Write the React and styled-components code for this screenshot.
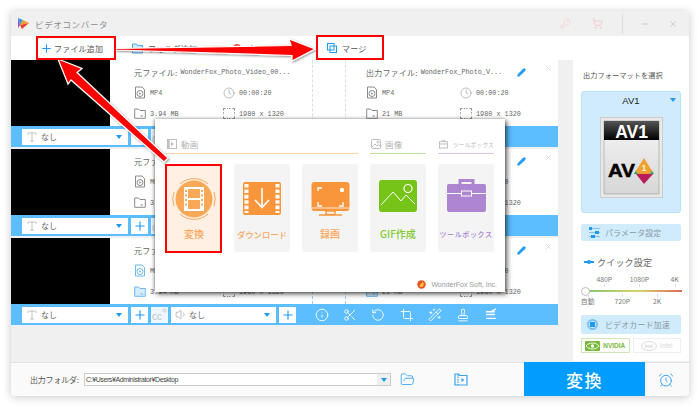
import React from "react";
import styled, { createGlobalStyle } from "styled-components";
import {
  Plus, X, Minus, KeyRound, ShoppingCart, Clock, Type, Volume1, Info, Scissors,
  RotateCcw, Crop, Wand2, Stamp, FolderOpen, AlarmClock, Pencil, ChevronRight,
} from "lucide-react";

const JP = `"Noto Sans CJK JP", "Noto Sans", sans-serif`;
const BLUE = "#1e9af5";

const Global = createGlobalStyle`
  html, body { margin: 0; padding: 0; background: #fff; }
  body { font-family: ${JP}; color: #555; overflow: hidden; }
`;

const Page = styled.div`
  position: relative;
  width: 700px;
  height: 407px;
  padding: 11px;
  box-sizing: border-box;
  background: #fff;
  overflow: hidden;
`;
const Win = styled.div`
  width: 678px;
  height: 385px;
  display: flex;
  flex-direction: column;
  background: #f0f0f0;
  border-radius: 3px;
  box-shadow: 0 1px 9px rgba(0, 0, 0, 0.22);
  overflow: hidden;
`;
const TitleBar = styled.div`
  height: 25px;
  flex: none;
  display: flex;
  align-items: center;
  background: #f0f0f0;
  padding-left: 6px;
`;
const AppName = styled.span`
  margin-left: 5px;
  font-size: 8.5px;
  letter-spacing: 0.65px;
  color: #8d8d8d;
`;
const TitleIcons = styled.div`
  margin-left: auto;
  margin-right: 2px;
  height: 100%;
  display: flex;
  align-items: center;
  color: #f3c9c4;
`;
const TitleSlot = styled.span`
  display: flex;
  justify-content: center;
  box-sizing: border-box;
  width: ${(p) => p.$w}px;
  padding-left: ${(p) => p.$pl || 0}px;
  margin-right: ${(p) => p.$mr || 0}px;
  color: ${(p) => p.$c || "inherit"};
  border-left: ${(p) => (p.$div ? "1px solid #ddd" : "none")};
  align-items: center;
  height: ${(p) => (p.$div ? "20px" : "auto")};
`;
const Toolbar = styled.div`
  height: 24px;
  flex: none;
  display: flex;
  align-items: center;
  background: #fff;
  padding-left: 29px;
`;
const ToolItem = styled.div`
  display: flex;
  align-items: center;
  gap: ${(p) => p.$gap || 4}px;
  width: ${(p) => p.$w}px;
  font-size: 8px;
  letter-spacing: 0.2px;
  color: #555;
  flex: none;
`;
const Main = styled.div`
  flex: 1;
  display: flex;
  min-height: 0;
`;
const List = styled.div`
  width: 547px;
  flex: none;
  display: flex;
  flex-direction: column;
  gap: 2px;
`;
const Row = styled.div`
  display: flex;
  flex-direction: column;
`;
const RowBody = styled.div`
  height: 66px;
  display: flex;
  background: #fff;
`;
const Thumb = styled.div`
  width: 99px;
  flex: none;
  background: #000;
`;
const InfoBlock = styled.div`
  width: ${(p) => p.$w}px;
  flex: none;
  box-sizing: border-box;
  padding: 6px 0 0 ${(p) => p.$pl}px;
`;
const Gutter = styled.div`
  width: 32px;
  flex: none;
  display: flex;
  align-items: center;
  color: #e3e3e3;
  border-left: 1px dashed ${(p) => (p.$on ? "#9ccff3" : "#dedede")};
  border-right: 1px dashed ${(p) => (p.$on ? "#9ccff3" : "#dedede")};
`;
const TitleLine = styled.div`
  height: 12px;
  display: flex;
  align-items: center;
  margin-bottom: 4px;
  white-space: nowrap;
`;
const Label = styled.span`
  font-size: 8px;
  letter-spacing: 0.2px;
  color: #666;
`;
const Mono = styled.span`
  font-family: "Liberation Mono", monospace;
  font-size: 6.8px;
  color: #666;
  margin-left: ${(p) => p.$ml || 0}px;
`;
const Close = styled.span`
  margin-left: auto;
  margin-right: 5px;
  margin-top: -7px;
  display: flex;
  color: #bdbdbd;
`;
const Pen = styled.span`
  display: flex;
  margin-left: 15px;
  color: ${BLUE};
`;
const Meta = styled.div`
  display: grid;
  grid-template-columns: ${(p) => p.$c}px 1fr;
  grid-auto-rows: 21px;
`;
const MetaCell = styled.div`
  display: flex;
  align-items: center;
  gap: 4px;
  color: ${(p) => (p.$on ? "#6fb9ee" : "#8a8a8a")};
`;
const Strip = styled.div`
  height: 21px;
  display: flex;
  align-items: center;
  background: #5cbdff;
  padding-left: 11px;
  box-sizing: border-box;
`;
const Select = styled.div`
  width: ${(p) => p.$w}px;
  height: 16px;
  flex: none;
  box-sizing: border-box;
  padding: 0 6px 0 4px;
  display: flex;
  align-items: center;
  gap: ${(p) => p.$gap}px;
  background: #fff;
  font-size: 8px;
  color: #666;
  margin-right: 3px;
`;
const Caret = styled.span`
  margin-left: auto;
  width: 0;
  height: 0;
  border-left: 3.5px solid transparent;
  border-right: 3.5px solid transparent;
  border-top: 4px solid ${BLUE};
`;
const SquareBtn = styled.div`
  width: ${(p) => p.$w}px;
  height: 16px;
  flex: none;
  margin-right: 3px;
  background: ${(p) => (p.$dim ? "#eef7fd" : "#fff")};
  color: ${(p) => (p.$dim ? "#b5b5b5" : BLUE)};
  display: flex;
  align-items: center;
  justify-content: center;
`;
const StripTools = styled.div`
  display: flex;
  margin-left: 9px;
  color: #fff;
`;
const StripTool = styled.span`
  width: 28.2px;
  display: flex;
  justify-content: center;
`;
const Side = styled.aside`
  width: 116px;
  margin-left: 15px;
  height: 301px;
  flex: none;
  box-sizing: border-box;
  padding: 9px 8px 0;
  background: #fff;
  display: flex;
  flex-direction: column;
`;
const SideTitle = styled.div`
  height: 12px;
  line-height: 12px;
  font-size: 7.2px;
  color: #555;
  letter-spacing: 0.05px;
  white-space: nowrap;
  margin-left: 2px;
`;
const FormatCard = styled.div`
  position: relative;
  margin-top: 10px;
  height: 122px;
  box-sizing: border-box;
  background: #d0ebfb;
  border: 1px solid #b4e3fb;
  border-radius: 3px;
  display: flex;
  flex-direction: column;
  align-items: center;
`;
const FormatName = styled.div`
  font-family: "Liberation Sans", sans-serif;
  font-size: 9.5px;
  color: #222;
  height: 16px;
  line-height: 17px;
  margin-bottom: 9px;
`;
const CardCaret = styled.span`
  position: absolute;
  top: 6px;
  right: 4px;
  border-left: 3.5px solid transparent;
  border-right: 3.5px solid transparent;
  border-top: 4px solid ${BLUE};
`;
const SideBtn = styled.div`
  height: ${(p) => p.$h}px;
  margin-top: ${(p) => p.$mt}px;
  background: #d0ebfb;
  border-radius: 2px;
  display: flex;
  align-items: center;
  gap: ${(p) => p.$gap}px;
  padding-left: ${(p) => p.$pl}px;
  font-size: 8px;
  letter-spacing: 0.1px;
  color: #8a9aa5;
  white-space: nowrap;
`;
const Quick = styled.div`
  margin: 15px 0 0 3px;
  height: 12px;
  display: flex;
  align-items: center;
  gap: 3px;
  font-size: 9px;
  letter-spacing: 0.2px;
  color: #666;
`;
const QuickMark = styled.span`
  width: 10px;
  height: 2px;
  background: ${BLUE};
  position: relative;
  &::after {
    content: "";
    position: absolute;
    left: 3px;
    top: -1px;
    width: 4px;
    height: 4px;
    border-radius: 50%;
    background: ${BLUE};
  }
`;
const Ticks = styled.div`
  margin: ${(p) => p.$mt}px -2px 0 -2px;
  display: grid;
  grid-template-columns: repeat(6, 1fr);
  font-size: 6.8px;
  height: 9px;
  line-height: 9px;
  color: #777;
`;
const Tick = styled.span`
  grid-column: ${(p) => p.$col};
  justify-self: center;
  white-space: nowrap;
  position: relative;
  &::after {
    content: "";
    position: absolute;
    left: 50%;
    ${(p) => (p.$up ? "bottom: -3px;" : "top: -3px;")}
    width: 1px;
    height: 3px;
    background: #ddd;
  }
`;
const Track = styled.div`
  position: relative;
  margin: 6px -1px 0 4px;
  height: 2px;
  background: linear-gradient(90deg, #7cc86b, #d9d46a 55%, #e0685c);
`;
const Knob = styled.span`
  position: absolute;
  left: -4px;
  top: -3.5px;
  width: 9px;
  height: 9px;
  box-sizing: border-box;
  border-radius: 50%;
  background: #fff;
  border: 1px solid #bbb;
`;
const Chip = styled.span`
  width: 11px;
  height: 11px;
  border-radius: 50%;
  border: 2px solid #7cc2f2;
  box-sizing: border-box;
  display: flex;
  align-items: center;
  justify-content: center;
  &::after {
    content: "";
    width: 5px;
    height: 5px;
    background: ${BLUE};
  }
`;
const Vendors = styled.div`
  margin-top: 4px;
  display: flex;
  gap: 3px;
`;
const Vendor = styled.div`
  flex: 1;
  height: 15px;
  box-sizing: border-box;
  border: 1px solid ${(p) => (p.$on ? "#cde8b5" : "#efefef")};
  display: flex;
  align-items: center;
  justify-content: center;
  gap: 3px;
  font-family: "Liberation Sans", sans-serif;
  font-size: 6.5px;
  font-weight: ${(p) => (p.$on ? 700 : 400)};
  color: ${(p) => (p.$on ? "#79b93c" : "#d8d8d8")};
`;
const Bottom = styled.div`
  height: 34px;
  flex: none;
  margin-top: 1px;
  background: #fafafa;
  border-top: 1px solid #e2e2e2;
  box-sizing: border-box;
  display: flex;
  align-items: center;
  padding-left: 19px;
`;
const BottomLabel = styled.span`
  font-size: 8px;
  letter-spacing: -0.2px;
  color: #555;
  width: 54px;
  flex: none;
  white-space: nowrap;
`;
const PathBox = styled.div`
  width: 307px;
  height: 13px;
  flex: none;
  box-sizing: border-box;
  border: 1px solid #ccc;
  background: #fff;
  display: flex;
  align-items: center;
  padding-left: 1px;
  font-family: "Liberation Sans", sans-serif;
  font-size: 7px;
  letter-spacing: -0.4px;
  color: #444;
`;
const PathCaret = styled.span`
  margin-left: auto;
  width: 13px;
  height: 100%;
  background: #f0f0f0;
  display: flex;
  align-items: center;
  justify-content: center;
`;
const CaretCentered = styled(Caret)`
  margin: 0;
`;
const BarIcon = styled.span`
  display: flex;
  flex: none;
  color: #3aa3f0;
  margin-left: ${(p) => p.$ml}px;
`;
const Convert = styled.div`
  margin-left: 56px;
  width: 121px;
  height: 34px;
  margin-top: -1px;
  flex: none;
  background: #009dff;
  color: #fff;
  font-size: 17px;
  font-weight: 500;
  letter-spacing: 1.5px;
  display: flex;
  align-items: center;
  justify-content: center;
`;
const Popup = styled.div`
  position: absolute;
  left: 155px;
  top: 119px;
  width: 350px;
  height: 173px;
  box-sizing: border-box;
  padding: 20px 11px 0;
  background: #fff;
  box-shadow: 2px 2px 5px rgba(0, 0, 0, 0.65), -1px 0 3px rgba(0, 0, 0, 0.3);
  display: flex;
  flex-direction: column;
`;
const Groups = styled.div`
  display: flex;
  gap: 12px;
`;
const Group = styled.section`
  width: ${(p) => p.$w}px;
  flex: none;
`;
const GroupHead = styled.div`
  height: 15px;
  box-sizing: border-box;
  border-bottom: 1.5px solid ${(p) => p.$c};
  display: flex;
  align-items: flex-start;
  gap: ${(p) => p.$gap || 4}px;
  padding-left: 1px;
  font-size: ${(p) => p.$fs || 8.5}px;
  letter-spacing: ${(p) => p.$ls || 0.3}px;
  color: #b5b5b5;
  line-height: 11px;
  white-space: nowrap;
`;
const Tiles = styled.div`
  margin-top: 10px;
  display: flex;
  gap: 12px;
`;
const Tile = styled.div`
  width: 56px;
  height: 88px;
  flex: none;
  box-sizing: border-box;
  padding-top: ${(p) => p.$pt}px;
  border-radius: 2px;
  background: ${(p) => p.$bg || "#f4f4f4"};
  display: flex;
  flex-direction: column;
  align-items: center;
`;
const TileLabel = styled.div`
  margin-top: auto;
  margin-bottom: 11px;
  text-align: center;
  font-size: ${(p) => p.$fs || 10}px;
  font-weight: 500;
  line-height: 14px;
  white-space: nowrap;
  letter-spacing: ${(p) => p.$ls || 0}px;
  color: ${(p) => p.$c};
`;
const Footer = styled.div`
  margin-top: auto;
  margin-bottom: 1px;
  margin-right: -3px;
  height: 13px;
  display: flex;
  align-items: center;
  justify-content: flex-end;
  gap: 5px;
  font-family: "Liberation Sans", sans-serif;
  font-size: 7px;
  color: #9a9a9a;
`;
const Mark = styled.div`
  position: absolute;
  left: ${(p) => p.$x}px;
  top: ${(p) => p.$y}px;
  width: ${(p) => p.$w}px;
  height: ${(p) => p.$h}px;
  box-sizing: border-box;
  border: 2.5px solid #f00;
`;
const Arrows = styled.svg`
  position: absolute;
  left: 0;
  top: 0;
  pointer-events: none;
`;

const Logo = () => (
  <svg width="13" height="13" viewBox="0 0 13 13">
    <path d="M1 1 L6 3 L3 8 Z" fill="#2f9ee8" />
    <path d="M6 3 L12 6 L3 8 Z" fill="#f3a02a" />
    <path d="M3 8 L12 6 L5 12 Z" fill="#e8432e" />
    <path d="M1 1 L3 8 L1 11 Z" fill="#9a4fc0" />
  </svg>
);
const VideoFile = () => (
  <svg width="12" height="13" viewBox="0 0 12 13" fill="none" stroke="currentColor" strokeWidth="1">
    <path d="M1.5 1 H8 L10.5 3.5 V12 H1.5 Z" />
    <circle cx="6" cy="7.5" r="3" />
    <path d="M5.2 6.2 L7.4 7.5 L5.2 8.8 Z" fill="currentColor" stroke="none" />
  </svg>
);
const FolderFile = ({ on }) => (
  <svg width="12" height="11" viewBox="0 0 12 11" stroke="currentColor" fill={on ? "#d4ecfb" : "none"} strokeWidth="1">
    <path d="M.7 1 H4.5 L6 2.5 H11.3 V10.3 H.7 Z" />
    <path d="M6.5 8 H9" />
  </svg>
);
const Dims = () => (
  <svg width="12" height="11" viewBox="0 0 12 11" fill="none" stroke="currentColor" strokeWidth="1">
    <path d="M.5 2.5 V.5 H2.5 M9.5 .5 H11.5 V2.5 M11.5 8.5 V10.5 H9.5 M2.5 10.5 H.5 V8.5" />
    <path d="M4 .5 H8 M4 10.5 H8 M.5 4.2 V6.8 M11.5 4.2 V6.8" strokeDasharray="1.2 1" />
  </svg>
);
const Lines = () => (
  <svg width="12" height="12" viewBox="0 0 11 11" stroke="currentColor" strokeWidth="1.3" fill="none">
    <path d="M1 3.5 H9 M1 6 H9 M1 9.5 H10 M6 3 L10 .8" />
  </svg>
);
const CcGlyph = () => (
  <svg width="15" height="14" viewBox="0 0 15 14">
    <text x="0" y="12" fontFamily="Liberation Sans" fontSize="10" fill="#c4c4c4">cc</text>
    <circle cx="12.5" cy="2.5" r="1.6" fill="none" stroke="#c4c4c4" strokeWidth=".8" />
  </svg>
);
const FilmFolder = () => (
  <svg width="14" height="13" viewBox="0 0 14 13" fill="none" stroke="currentColor" strokeWidth="1.2">
    <path d="M1 1 H5 V2.5 H13 V12 H1 Z" />
    <path d="M4 1 V12" strokeDasharray="1.5 1" />
    <path d="M7.5 5 L10.5 7 L7.5 9 Z" fill="currentColor" stroke="none" />
  </svg>
);
const FolderBlue = () => (
  <svg width="12" height="11" viewBox="0 0 12 11">
    <path d="M.5 1 H4.5 L5.5 2.5 H10.5 V10 H.5 Z" fill="#cfe9fb" stroke="#4aa8ea" />
  </svg>
);
const HeadFilm = () => (
  <svg width="10" height="10" viewBox="0 0 10 10" fill="none" stroke="#bdbdbd" strokeWidth="1">
    <rect x=".5" y=".5" width="9" height="9" />
    <path d="M1.8 .5 V9.5" strokeWidth="1.5" />
    <path d="M4 3 L7 5 L4 7 Z" fill="#bdbdbd" stroke="none" />
  </svg>
);
const HeadPhoto = () => (
  <svg width="10" height="10" viewBox="0 0 10 10" fill="none" stroke="#bdbdbd" strokeWidth="1">
    <rect x=".5" y=".5" width="9" height="9" rx="1" />
    <path d="M1 8 L4 5 L6 7 L7.5 5.5 L9 7" />
    <circle cx="7" cy="3" r="1" />
  </svg>
);
const HeadBox = () => (
  <svg width="10" height="10" viewBox="0 0 10 10" fill="none" stroke="#bdbdbd" strokeWidth="1">
    <rect x=".5" y="2.5" width="9" height="7" />
    <path d="M3.5 2.5 V.8 H6.5 V2.5 M.5 5 H9.5" />
  </svg>
);
const ConvertIcon = () => (
  <svg width="44" height="44" viewBox="0 0 44 44">
    <path d="M8 7 A21 21 0 0 1 36 7 M36 37 A21 21 0 0 1 8 37 M2 15 A21 21 0 0 0 2 29 M42 15 A21 21 0 0 1 42 29" fill="none" stroke="#f8a958" strokeWidth="1" />
    <circle cx="22" cy="22" r="18.5" fill="#f8a857" />
    <rect x="12" y="10" width="20" height="24" fill="#fff" />
    <rect x="16" y="12" width="12" height="9" fill="#f8a857" />
    <rect x="16" y="23" width="12" height="9" fill="#f8a857" />
    <path d="M14 13 V31 M30 13 V31" stroke="#f8a857" strokeWidth="2" strokeDasharray="2 2.5" />
  </svg>
);
const DownloadIcon = () => (
  <svg width="38" height="34" viewBox="0 0 38 34">
    <rect width="38" height="33" rx="2" fill="#f9963c" />
    <path d="M3.5 2 V31 M34.5 2 V31" stroke="#fff" strokeWidth="4" strokeDasharray="3.6 1.8" />
    <path d="M19 6 V25 M12 18 L19 25.5 L26 18" stroke="#fff" strokeWidth="1.6" fill="none" />
  </svg>
);
const RecordIcon = () => (
  <svg width="39" height="34" viewBox="0 0 39 34">
    <rect x=".5" y="0" width="38" height="29" rx="3" fill="#f9963c" />
    <path d="M7 9 V6 H11 M28 24 H32 V20 M7 20 V24 H11" stroke="#fff" strokeWidth="1.3" fill="none" />
    <circle cx="31" cy="8" r="2.2" fill="#fff" />
    <path d="M.5 26 H38.5" stroke="#fff" strokeWidth=".8" />
    <path d="M15 29 H24 V32.5 H15 Z M8 33 H31" stroke="#f9963c" strokeWidth="1.4" fill="none" />
  </svg>
);
const PhotoIcon = () => (
  <svg width="38" height="32" viewBox="0 0 38 32">
    <rect width="38" height="32" rx="3" fill="#76c417" />
    <path d="M2 25 L14 12 L22 21 L27 15 L36 24" fill="none" stroke="#fff" strokeWidth="1" />
    <circle cx="29" cy="8.5" r="4" fill="none" stroke="#fff" strokeWidth="1.2" />
  </svg>
);
const BoxIcon = () => (
  <svg width="39" height="33" viewBox="0 0 39 33">
    <path d="M13 5 V1.5 H26 V5" fill="none" stroke="#ad85d0" strokeWidth="3" />
    <rect y="5" width="39" height="28" rx="2" fill="#ad85d0" />
    <path d="M0 14.5 H39" stroke="#fff" strokeWidth="1.2" />
    <rect x="14.5" y="12" width="10" height="5" fill="#ad85d0" stroke="#fff" strokeWidth="1" />
  </svg>
);
const Av1Icon = () => (
  <svg width="63" height="81" viewBox="0 0 63 81">
    <defs>
      <linearGradient id="top" x1="0" y1="0" x2="0" y2="1">
        <stop offset="0" stopColor="#555" />
        <stop offset="1" stopColor="#000" />
      </linearGradient>
      <linearGradient id="bot" x1="0" y1="0" x2="0" y2="1">
        <stop offset="0" stopColor="#f6f6f6" />
        <stop offset="1" stopColor="#d6d6d6" />
      </linearGradient>
    </defs>
    <rect x=".5" y=".5" width="62" height="80" fill="#e9e9e9" stroke="#ccc" />
    <rect x="4" y="4" width="55" height="73" fill="url(#bot)" stroke="#999" strokeWidth=".6" />
    <rect x="4" y="4" width="55" height="19" fill="url(#top)" />
    <text x="31.5" y="20.5" textAnchor="middle" fill="#fff" fontFamily="Liberation Sans" fontWeight="700" fontSize="17.5">AV1</text>
    <text x="8" y="60" fill="#000" stroke="#000" strokeWidth=".5" fontFamily="Liberation Sans" fontWeight="700" fontSize="19" textLength="27" lengthAdjust="spacingAndGlyphs">AV</text>
    <path d="M44 41 L54 57 H34 Z" fill="#f0a030" />
    <path d="M36 54 L34 57 H38 Z M52 54 L54 57 H50 Z" fill="#26a67a" />
    <path d="M36 57 H53 L44 67 Z" fill="#b81e5a" />
    <text x="44" y="54" textAnchor="middle" fill="#fff4c0" fontFamily="Liberation Sans" fontWeight="700" fontSize="9">1</text>
  </svg>
);
const ParamIcon = () => (
  <svg width="11" height="11" viewBox="0 0 11 11" stroke="#1e9af5" strokeWidth="1.2">
    <path d="M0 1.5 H11 M0 5.5 H11 M0 9.5 H11" stroke="#7cc2f2" />
    <path d="M0 1.5 H3 M6 5.5 H10 M2 9.5 H6" strokeWidth="3" />
  </svg>
);
const NvidiaEye = () => (
  <svg width="15" height="10" viewBox="0 0 15 10">
    <rect width="15" height="10" rx="1" fill="#79b93c" />
    <path d="M1 5 C4 1 11 1 14 5 C11 9 4 9 1 5 Z" fill="none" stroke="#fff" strokeWidth=".9" />
    <circle cx="7.5" cy="5" r="1.7" fill="#fff" />
  </svg>
);
const IntelOval = () => (
  <svg width="16" height="10" viewBox="0 0 16 10">
    <ellipse cx="8" cy="5" rx="7.5" ry="4.5" fill="none" stroke="#dcdcdc" />
    <text x="8" y="6.8" textAnchor="middle" fontSize="4.5" fill="#ccc" fontFamily="Liberation Sans">intel</text>
  </svg>
);
const Flame = () => (
  <svg width="9" height="9" viewBox="0 0 9 9">
    <circle cx="4.5" cy="4.5" r="4.2" fill="#e8501f" />
    <path d="M3 7 C2 4 5 4 5.5 1.5 C7 3 7.5 6 5 7 Z" fill="#f8c040" />
  </svg>
);
const MergeGlyph = () => (
  <svg width="10" height="10" viewBox="0 0 10 10" fill="none" stroke={BLUE}>
    <rect x=".5" y=".5" width="6.5" height="6.5" />
    <rect x="3" y="3" width="6.5" height="6.5" />
  </svg>
);
const DiscDot = styled.span`
  width: 8px;
  height: 8px;
  border-radius: 50%;
  background: #e8564a;
`;

const rows = [{ on: false }, { on: false }, { on: true }];
const tools = [Info, Scissors, RotateCcw, Crop, Wand2, Stamp];

const InfoColumn = ({ w, pl, cols, title, file, size, on, children }) => (
  <InfoBlock $w={w} $pl={pl}>
    <TitleLine>
      <Label>{title}</Label>
      <Mono $ml={3}>{file}</Mono>
      {children}
    </TitleLine>
    <Meta $c={cols}>
      <MetaCell $on={on}><VideoFile /><Mono>MP4</Mono></MetaCell>
      <MetaCell><Clock size={12} strokeWidth={1.1} /><Mono>00:00:20</Mono></MetaCell>
      <MetaCell $on={on}><FolderFile on={on} /><Mono>{size}</Mono></MetaCell>
      <MetaCell><Dims /><Mono>1980 x 1320</Mono></MetaCell>
    </Meta>
  </InfoBlock>
);

const FileRow = ({ on }) => (
  <Row>
    <RowBody>
      <Thumb />
      <InfoColumn w={202} pl={24} cols={89} title="元ファイル:" file="WonderFox_Photo_Video_00..." size="3.94 MB" on={on} />
      <Gutter $on={on}><ChevronRight size={10} strokeWidth={1} /></Gutter>
      <InfoColumn w={212} pl={20} cols={94} title="出力ファイル:" file="WonderFox_Photo_V..." size="21 MB" on={on}>
        <Pen><Pencil size={9} strokeWidth={2.6} fill={BLUE} /></Pen>
        <Close><X size={9} strokeWidth={1.2} /></Close>
      </InfoColumn>
    </RowBody>
    <Strip>
      <Select $w={106} $gap={3}><Type size={12} strokeWidth={1} color="#888" />なし<Caret /></Select>
      <SquareBtn $w={17}><Plus size={14} strokeWidth={2} /></SquareBtn>
      <SquareBtn $w={17} $dim><CcGlyph /></SquareBtn>
      <Select $w={105} $gap={1}><Volume1 size={13} strokeWidth={1} color="#888" />なし<Caret /></Select>
      <SquareBtn $w={17}><Plus size={14} strokeWidth={2} /></SquareBtn>
      <StripTools>
        {tools.map((T, i) => (
          <StripTool key={i}><T size={14} strokeWidth={1.5} /></StripTool>
        ))}
        <StripTool><Lines /></StripTool>
      </StripTools>
    </Strip>
  </Row>
);

export default function App() {
  return (
    <Page>
      <Global />
      <Win>
        <TitleBar>
          <Logo />
          <AppName>ビデオコンバータ</AppName>
          <TitleIcons>
            <TitleSlot $w={32}><KeyRound size={11} strokeWidth={1.3} /></TitleSlot>
            <TitleSlot $w={32} $mr={9}><ShoppingCart size={11} strokeWidth={1.8} /></TitleSlot>
            <TitleSlot $w={37} $pl={8} $div $c="#a8a8a8"><Minus size={10} strokeWidth={1.2} /></TitleSlot>
            <TitleSlot $w={28} $c="#a8a8a8"><X size={10} strokeWidth={1.2} /></TitleSlot>
          </TitleIcons>
        </TitleBar>
        <Toolbar>
          <ToolItem $w={92} $gap={1}><Plus size={13} strokeWidth={2} color={BLUE} />ファイル追加</ToolItem>
          <ToolItem $w={101}><FolderBlue />フォルダ追加</ToolItem>
          <ToolItem $w={94}><DiscDot />ディスク</ToolItem>
          <ToolItem $w={60} $gap={5}><MergeGlyph />マージ</ToolItem>
        </Toolbar>
        <Main>
          <List>
            {rows.map((r, i) => <FileRow key={i} on={r.on} />)}
          </List>
          <Side>
            <SideTitle>出力フォーマットを選択</SideTitle>
            <FormatCard>
              <FormatName>AV1</FormatName>
              <CardCaret />
              <Av1Icon />
            </FormatCard>
            <SideBtn $h={17} $mt={11} $gap={5} $pl={8}><ParamIcon />パラメータ設定</SideBtn>
            <Quick><QuickMark />クイック設定</Quick>
            <Ticks $mt={7}>
              <Tick $col={2} $up>480P</Tick>
              <Tick $col={4} $up>1080P</Tick>
              <Tick $col={6} $up>4K</Tick>
            </Ticks>
            <Track><Knob /></Track>
            <Ticks $mt={5}>
              <Tick $col={1}>自動</Tick>
              <Tick $col={3}>720P</Tick>
              <Tick $col={5}>2K</Tick>
            </Ticks>
            <SideBtn $h={19} $mt={9} $gap={7} $pl={6}><Chip />ビデオカード加速</SideBtn>
            <Vendors>
              <Vendor $on><NvidiaEye />NVIDIA</Vendor>
              <Vendor><IntelOval />Intel</Vendor>
            </Vendors>
          </Side>
        </Main>
        <Bottom>
          <BottomLabel>出力フォルダ:</BottomLabel>
          <PathBox>C:¥Users¥Administrator¥Desktop<PathCaret><CaretCentered /></PathCaret></PathBox>
          <BarIcon $ml={9}><FolderOpen size={15} strokeWidth={1.4} /></BarIcon>
          <BarIcon $ml={39}><FilmFolder /></BarIcon>
          <Convert>変換</Convert>
          <BarIcon $ml={13}><AlarmClock size={16} strokeWidth={1.5} /></BarIcon>
        </Bottom>
      </Win>

      <Popup>
        <Groups>
          <Group $w={192}>
            <GroupHead $c="#fbd2a8"><HeadFilm />動画</GroupHead>
            <Tiles>
              <Tile $bg="#fff0e3" $pt={13}><ConvertIcon /><TileLabel $c="#f9a85c">変換</TileLabel></Tile>
              <Tile $pt={18}><DownloadIcon /><TileLabel $fs={8.4} $c="#f9a85c">ダウンロード</TileLabel></Tile>
              <Tile $pt={18}><RecordIcon /><TileLabel $c="#f9a85c">録画</TileLabel></Tile>
            </Tiles>
          </Group>
          <Group $w={56}>
            <GroupHead $c="#bde59a"><HeadPhoto />画像</GroupHead>
            <Tiles><Tile $pt={16}><PhotoIcon /><TileLabel $c="#82c92f">GIF作成</TileLabel></Tile></Tiles>
          </Group>
          <Group $w={56}>
            <GroupHead $c="#d9c4ee" $fs={5.7} $ls={0.2} $gap={5}><HeadBox />ツールボックス</GroupHead>
            <Tiles><Tile $pt={15}><BoxIcon /><TileLabel $fs={7} $ls={0.6} $c="#a77fd0">ツールボックス</TileLabel></Tile></Tiles>
          </Group>
        </Groups>
        <Footer><Flame />WonderFox Soft, Inc.</Footer>
      </Popup>

      <Arrows width="700" height="407" viewBox="0 0 700 407">
        <defs>
          <filter id="sh" x="-10%" y="-10%" width="120%" height="120%">
            <feDropShadow dx="1" dy="1" stdDeviation="1" floodOpacity="0.45" />
          </filter>
        </defs>
        <g filter="url(#sh)" fill="#f00" stroke="#fff" strokeWidth="1.2" strokeLinejoin="miter">
          <path d="M116 48.5 L291 45.5 L289 39 L315 49 L292 61 L292 55.5 L116 50 Z" />
          <path d="M58 59 L82 68.5 L77 72.5 L168 158 L164 162 L71 80 L68 84 Z" />
        </g>
      </Arrows>
      <Mark $x={36} $y={36} $w={80} $h={24} />
      <Mark $x={316} $y={35} $w={68} $h={25} />
      <Mark $x={165} $y={164} $w={57} $h={89} />
    </Page>
  );
}
